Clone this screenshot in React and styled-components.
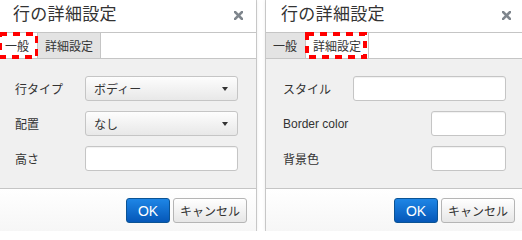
import React from 'react';
import styled, { createGlobalStyle } from 'styled-components';

const GlobalStyle = createGlobalStyle`
    html, body {
        margin: 0;
        padding: 0;
        background: #fff;
        overflow: hidden;
    }
    body {
        font-family: "Liberation Sans", "Noto Sans CJK JP", sans-serif;
        color: #333;
    }
`;

const Page = styled.div`
    display: flex;
    gap: 10px;
    margin-left: -2px;
    width: 540px;
    height: 231px;
`;

const Dialog = styled.div`
    position: relative;
    flex: 0 0 258px;
    height: 231px;
    display: flex;
    flex-direction: column;
    background: #fff;
    box-shadow: 0 0 0 1px rgba(0, 0, 0, 0.18), 0 0 4px rgba(0, 0, 0, 0.12);
    overflow: hidden;
`;

const Header = styled.div`
    height: 32px;
    border-bottom: 1px solid #c5c5c5;
    display: flex;
    align-items: center;
    justify-content: space-between;
    padding: 0 13px 0 15px;
    flex-shrink: 0;
`;

const Title = styled.div`
    font-size: 17px;
    line-height: 20px;
    margin-top: -2px;
    color: #333;
    letter-spacing: 0.3px;
`;

const CloseIcon = styled.svg`
    width: 9px;
    height: 9px;
    margin-top: -1px;
`;

const TabBar = styled.div`
    height: 25px;
    border-bottom: 1px solid #c5c5c5;
    display: flex;
    background: #fff;
    flex-shrink: 0;
`;

const Tab = styled.div`
    position: relative;
    height: 25px;
    padding: 0 7px;
    display: flex;
    align-items: center;
    font-size: 12px;
    color: #333;
    background: ${p => (p.active ? '#fff' : '#e3e3e3')};
    border-right: 1px solid #c5c5c5;
    &:first-child {
        padding: 0 8px 0 7px;
    }
`;

const Marker = styled.svg`
    position: absolute;
    top: -1px;
    left: ${p => p.left}px;
    width: ${p => p.w}px;
    height: 27px;
    overflow: visible;
    pointer-events: none;
`;

const Body = styled.div`
    flex: 1;
    background: #f0f0f0;
    padding: 17px 18px 16px 17px;
    display: flex;
    flex-direction: column;
    gap: 10px;
`;

const Row = styled.div`
    display: flex;
    align-items: center;
    justify-content: space-between;
    height: 25px;
`;

const Label = styled.label`
    font-size: 12px;
    color: #333;
`;

const Field = styled.div`
    width: ${p => p.w}px;
    height: 25px;
    box-sizing: border-box;
    border: 1px solid #c5c5c5;
    border-radius: 3px;
    background: #fff;
    box-shadow: inset 0 1px 1px rgba(0, 0, 0, 0.06);
`;

const SelectBox = styled.div`
    width: ${p => p.w}px;
    height: 25px;
    box-sizing: border-box;
    border: 1px solid #c5c5c5;
    border-radius: 3px;
    background: linear-gradient(#fdfdfd, #e8e8e8);
    display: flex;
    align-items: center;
    justify-content: space-between;
    padding: 0 9px 0 8px;
    font-size: 12px;
    color: #333;
`;

const Caret = styled.span`
    width: 0;
    height: 0;
    border-left: 3px solid transparent;
    border-right: 3px solid transparent;
    border-top: 4px solid #333;
`;

const Footer = styled.div`
    flex-shrink: 0;
    height: 43px;
    box-sizing: border-box;
    border-top: 1px solid #c5c5c5;
    background: linear-gradient(#fff, #f6f6f6);
    display: flex;
    justify-content: flex-end;
    align-items: flex-start;
    gap: 3px;
    padding: 9px 9px 0 0;
`;

const Button = styled.button`
    height: 25px;
    box-sizing: border-box;
    border-radius: 3px;
    font-family: inherit;
    padding: 0;
    width: ${p => p.w}px;
    font-size: ${p => (p.primary ? '14px' : '12px')};
    color: ${p => (p.primary ? '#fff' : '#333')};
    border: 1px solid ${p => (p.primary ? '#0b5394' : '#b5b5b5')};
    background: ${p => (p.primary
        ? 'linear-gradient(#1e86e6, #0557b8)'
        : 'linear-gradient(#fff, #e6e6e6)')};
`;

const Close = () => (
    <CloseIcon viewBox="0 0 9 9">
        <path d="M1 1 L8 8 M8 1 L1 8" stroke="#7f868d" strokeWidth="2.6" strokeLinecap="square" />
    </CloseIcon>
);

const DashBox = ({ left, w }) => (
    <Marker left={left} w={w} viewBox={`0 0 ${w} 27`}>
        <rect x="2" y="2" width={w - 4} height="23" fill="none" stroke="#ff0000"
            strokeWidth="4" strokeDasharray="7 6" />
    </Marker>
);

const Tabs = ({ activeIndex }) => (
    <TabBar>
        <Tab active={activeIndex === 0}>
            一般
            {activeIndex === 0 && <DashBox left={0} w={41} />}
        </Tab>
        <Tab active={activeIndex === 1}>
            詳細設定
            {activeIndex === 1 && <DashBox left={-1} w={62} />}
        </Tab>
    </TabBar>
);

const DialogFooter = () => (
    <Footer>
        <Button primary w={44}>OK</Button>
        <Button w={74}>キャンセル</Button>
    </Footer>
);

const GeneralDialog = () => (
    <Dialog>
        <Header>
            <Title>行の詳細設定</Title>
            <Close />
        </Header>
        <Tabs activeIndex={0} />
        <Body>
            <Row>
                <Label>行タイプ</Label>
                <SelectBox w={153}>ボディー<Caret /></SelectBox>
            </Row>
            <Row>
                <Label>配置</Label>
                <SelectBox w={153}>なし<Caret /></SelectBox>
            </Row>
            <Row>
                <Label>高さ</Label>
                <Field w={153} />
            </Row>
        </Body>
        <DialogFooter />
    </Dialog>
);

const AdvancedDialog = () => (
    <Dialog>
        <Header>
            <Title>行の詳細設定</Title>
            <Close />
        </Header>
        <Tabs activeIndex={1} />
        <Body>
            <Row>
                <Label>スタイル</Label>
                <Field w={153} />
            </Row>
            <Row>
                <Label>Border color</Label>
                <Field w={75} />
            </Row>
            <Row>
                <Label>背景色</Label>
                <Field w={75} />
            </Row>
        </Body>
        <DialogFooter />
    </Dialog>
);

const App = () => (
    <>
        <GlobalStyle />
        <Page>
            <GeneralDialog />
            <AdvancedDialog />
        </Page>
    </>
);

export default App;
